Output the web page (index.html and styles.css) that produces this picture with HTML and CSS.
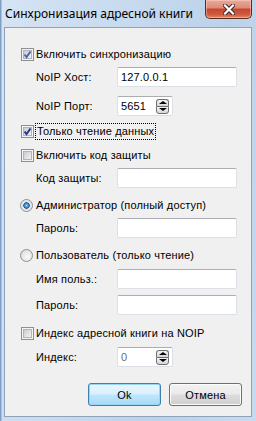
FILE: index.html
```html
<!DOCTYPE html>
<html lang="ru">
<head>
  <meta charset="UTF-8">
  <title>Синхронизация адресной книги</title>
  <link rel="stylesheet" href="styles.css">
</head>
<body>
  <div class="window">
    <div class="titlebar">
      <span class="title">Синхронизация адресной книги</span>
      <div class="close">
        <svg width="12" height="11" viewBox="0 0 12 11">
          <path d="M2 1.5 L10 9.5 M10 1.5 L2 9.5" stroke="#4a2626" stroke-width="4.2" stroke-linecap="square" fill="none"/>
          <path d="M2 1.5 L10 9.5 M10 1.5 L2 9.5" stroke="#fff" stroke-width="2.2" stroke-linecap="square" fill="none"/>
        </svg>
      </div>
    </div>

    <div class="client">
      <div class="row check mt19">
        <span class="cb"><svg class="tick pale" viewBox="0 0 9 9"><path d="M1.5 4.5 L3.5 7 L7.5 1.5"/></svg></span>
        <span class="text">Включить синхронизацию</span>
      </div>
      <div class="row field mt6">
        <span class="label">NoIP Хост:</span>
        <div class="edit">127.0.0.1</div>
      </div>
      <div class="row field mt9">
        <span class="label">NoIP Порт:</span>
        <div class="edit spin"><span>5651</span><span class="spinner"><i class="up"></i><i class="down"></i></span></div>
      </div>
      <div class="row check focus-row mt7">
        <span class="cb"><svg class="tick" viewBox="0 0 9 9"><path d="M1.5 4.5 L3.5 7 L7.5 1.5"/></svg></span>
        <span class="text focus">Только чтение данных</span>
      </div>
      <div class="row check mt8">
        <span class="cb"></span>
        <span class="text">Включить код защиты</span>
      </div>
      <div class="row field mt6">
        <span class="label">Код защиты:</span>
        <div class="edit"></div>
      </div>
      <div class="row check mt10">
        <span class="rb on"></span>
        <span class="text">Администратор (полный доступ)</span>
      </div>
      <div class="row field mt6">
        <span class="label">Пароль:</span>
        <div class="edit"></div>
      </div>
      <div class="row check mt10">
        <span class="rb"></span>
        <span class="text">Пользователь (только чтение)</span>
      </div>
      <div class="row field mt7">
        <span class="label">Имя польз.:</span>
        <div class="edit"></div>
      </div>
      <div class="row field mt6">
        <span class="label">Пароль:</span>
        <div class="edit"></div>
      </div>
      <div class="row check mt11">
        <span class="cb"></span>
        <span class="text">Индекс адресной книги на NOIP</span>
      </div>
      <div class="row field mt7">
        <span class="label">Индекс:</span>
        <div class="edit spin disabled"><span>0</span><span class="spinner"><i class="up"></i><i class="down"></i></span></div>
      </div>
      <div class="buttons">
        <button class="btn default">Ok</button>
        <button class="btn">Отмена</button>
      </div>
    </div>
  </div>
</body>
</html>
```

FILE: styles.css
```css
body {
  margin: 0;
  background: #c4d7ed;
  font-family: 'Liberation Sans', Arial, sans-serif;
  font-size: 11px;
  letter-spacing: 0.15px;
  color: #000;
}
.window {
  width: 256px;
  height: 421px;
  display: flex;
  flex-direction: column;
  background: linear-gradient(100deg, #d6e4f3 0%, #c9dbef 35%, #bcd2ea 70%, #c8daee 100%);
  box-shadow: inset 1px 0 0 #7d9fc6, inset 2px 0 0 #a9c3e0;
}
.titlebar {
  height: 27px;
  display: flex;
  justify-content: space-between;
  align-items: flex-start;
}
.title {
  font-family: 'Noto Sans', sans-serif;
  font-size: 12px;
  letter-spacing: 0;
  padding: 5px 0 0 5px;
  color: #000;
}
.close {
  width: 45px;
  height: 18px;
  margin-right: 4px;
  border: 1px solid #5b2a24;
  border-top: none;
  border-radius: 0 0 5px 5px;
  background: linear-gradient(#e9a99a 0%, #dd8a78 45%, #c7432d 50%, #cf5a3e 80%, #e08a62 100%);
  box-shadow: inset 0 0 0 1px rgba(255, 220, 210, 0.45);
  display: flex;
  align-items: center;
  justify-content: center;
}
.client {
  flex: 1;
  margin: 0 4px 4px 4px;
  background: #f0f0f0;
  border: 1px solid #8ea3bb;
  display: flex;
  flex-direction: column;
}
.row {
  display: flex;
  align-items: center;
}
.check {
  height: 14px;
  padding-left: 16px;
}
.focus-row {
  height: 17px;
}
.field {
  height: 20px;
  padding-left: 31px;
}
.mt6 { margin-top: 6px; }
.mt7 { margin-top: 7px; }
.mt8 { margin-top: 8px; }
.mt9 { margin-top: 9px; }
.mt10 { margin-top: 10px; }
.mt11 { margin-top: 11px; }
.mt19 { margin-top: 19px; }

.text {
  margin-left: 2px;
  white-space: nowrap;
}
.focus {
  margin-left: 1px;
  padding: 1px 1px 2px 1px;
  border: 1px dotted #000;
}
.label {
  width: 81px;
  white-space: nowrap;
}

/* checkbox */
.cb {
  width: 13px;
  height: 13px;
  box-sizing: border-box;
  border: 1px solid #8e8f8f;
  background: #f4f4f4;
  padding: 1px;
  position: relative;
}
.cb::before {
  content: "";
  display: block;
  width: 9px;
  height: 9px;
  box-sizing: border-box;
  border: 1px solid #b1b5bb;
  background: linear-gradient(135deg, #c8ccd2, #f2f3f4);
}
.tick {
  position: absolute;
  left: 1px;
  top: 1px;
  width: 9px;
  height: 9px;
  fill: none;
  stroke: #23388a;
  stroke-width: 2;
}
.tick.pale {
  stroke: #4e66b0;
}

/* radio */
.rb {
  width: 13px;
  height: 13px;
  margin-left: -1px;
  margin-right: 1px;
  box-sizing: border-box;
  border-radius: 50%;
  border: 1px solid #8e8f8f;
  background: radial-gradient(circle at 60% 60%, #fafafa 0%, #e2e3e5 60%, #cfd1d4 100%);
}
.rb.on {
  background: radial-gradient(circle at 50% 50%, #9fd2f7 0%, #2f82cc 28%, #1b4f8e 38%, #dfe1e4 44%, #f4f4f4 100%);
}

/* edits */
.edit {
  width: 120px;
  height: 20px;
  box-sizing: border-box;
  background: #fff;
  border: 1px solid #dbdfe6;
  border-top-color: #abadb3;
  border-radius: 2px;
  padding: 0 3px;
  display: flex;
  align-items: center;
  justify-content: space-between;
}
.edit.spin {
  width: 56px;
  padding-right: 3px;
}
.edit.disabled {
  color: #6d6d6d;
}
.spinner {
  width: 13px;
  height: 15px;
  display: flex;
  flex-direction: column;
}
.spinner i {
  flex: 1;
  box-sizing: border-box;
  border: 1px solid #6f6f6f;
  background: linear-gradient(#f4f4f4, #d6d6d6);
  display: flex;
  align-items: center;
  justify-content: center;
}
.spinner .up {
  border-radius: 3px 3px 0 0;
  border-bottom-width: 0;
}
.spinner .down {
  border-radius: 0 0 3px 3px;
}
.spinner .up::before {
  content: "";
  border: 3px solid transparent;
  border-top: none;
  border-bottom: 3px solid #000;
  border-left-width: 4px;
  border-right-width: 4px;
}
.spinner .down::before {
  content: "";
  border: 3px solid transparent;
  border-bottom: none;
  border-top: 3px solid #000;
  border-left-width: 4px;
  border-right-width: 4px;
}

/* buttons */
.buttons {
  display: flex;
  margin-top: 16px;
  padding-left: 83px;
  gap: 8px;
}
.btn {
  width: 73px;
  height: 23px;
  font-family: 'Liberation Sans', Arial, sans-serif;
  font-size: 11px;
  letter-spacing: 0.15px;
  color: #000;
  border: 1px solid #707070;
  border-radius: 3px;
  background: linear-gradient(#f2f2f2 0%, #ebebeb 48%, #dddddd 52%, #cfcfcf 100%);
  box-shadow: inset 0 0 0 1px #fcfcfc;
  padding: 0;
}
.btn.default {
  border-color: #3c7fb1;
  background: linear-gradient(#eaf6fd 0%, #d9f0fc 48%, #bee6fd 52%, #a7d9f5 100%);
  box-shadow: inset 0 0 0 1px #97d7f5;
}
```
